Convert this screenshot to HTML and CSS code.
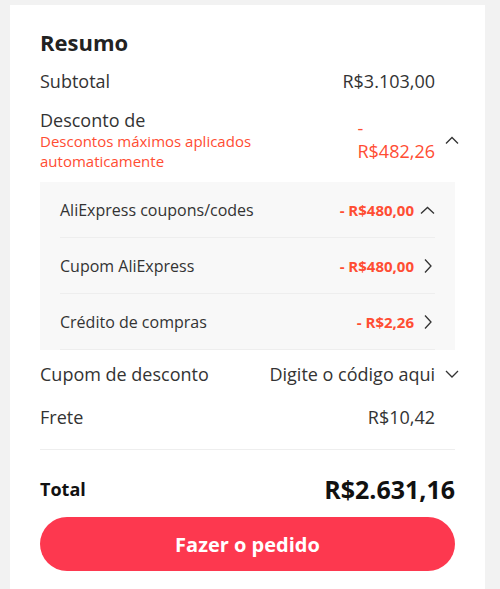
FILE: index.html
```html
<!DOCTYPE html>
<html lang="pt">
<head>
    <meta charset="UTF-8">
    <meta name="viewport" content="width=device-width, initial-scale=1.0">
    <title>Resumo do pedido</title>
    <link rel="stylesheet" href="styles.css">
</head>
<body>
    <div class="card">
        <h2 class="title">Resumo</h2>

        <div class="row">
            <span class="label">Subtotal</span>
            <span class="value">R$3.103,00</span>
            <span class="icon"></span>
        </div>

        <div class="row discount">
            <div class="label">
                Desconto de
                <div class="hint">Descontos máximos aplicados automaticamente</div>
            </div>
            <span class="value red stacked">-<br>R$482,26</span>
            <svg class="icon" viewBox="0 0 14 8"><path d="M1 7.5 7 1.5 13 7.5"/></svg>
        </div>

        <div class="breakdown">
            <div class="sub-row">
                <span class="label">AliExpress coupons/codes</span>
                <span class="value red bold">- R$480,00</span>
                <svg class="icon" viewBox="0 0 15 8"><path d="M1 7.5 7.5 1.5 14 7.5"/></svg>
            </div>
            <div class="sub-row">
                <span class="label">Cupom AliExpress</span>
                <span class="value red bold">- R$480,00</span>
                <svg class="icon tall" viewBox="0 0 15 16"><path d="M5 1.5 11 8 5 14.5"/></svg>
            </div>
            <div class="sub-row">
                <span class="label">Crédito de compras</span>
                <span class="value red bold">- R$2,26</span>
                <svg class="icon tall" viewBox="0 0 15 16"><path d="M5 1.5 11 8 5 14.5"/></svg>
            </div>
        </div>

        <div class="row coupon">
            <span class="label">Cupom de desconto</span>
            <span class="value">Digite o código aqui</span>
            <svg class="icon" viewBox="0 0 14 8"><path d="M1 1 7 7 13 1"/></svg>
        </div>

        <div class="row shipping">
            <span class="label">Frete</span>
            <span class="value">R$10,42</span>
            <span class="icon"></span>
        </div>

        <div class="total">
            <span class="total-label">Total</span>
            <span class="total-value">R$2.631,16</span>
        </div>

        <button class="order-btn">Fazer o pedido</button>
    </div>
</body>
</html>
```

FILE: styles.css
```css
body {
    margin: 0;
    background: #f2f2f2;
    font-family: "Open Sans", "Noto Sans", sans-serif;
    color: #333;
}
.card {
    background: white;
    width: 415px;
    margin: 5px 0 0 10px;
    padding: 22px 30px 18px;
}
.title {
    font-size: 22px;
    font-weight: 700;
    color: #222;
    margin: 0;
    line-height: 30px;
}
.row {
    display: flex;
    align-items: center;
    font-size: 18px;
    line-height: 24px;
    padding: 11px 0;
}
.row:first-of-type {
    padding-top: 12px;
}
.row .label {
    flex: 1;
}
.value {
    text-align: right;
}
.icon {
    width: 14px;
    height: 8px;
    margin-left: 10px;
    margin-right: -4px;
    flex-shrink: 0;
    fill: none;
    stroke: #333;
    stroke-width: 1.3;
}
.discount {
    padding: 5px 0 11px;
}
.discount .label {
    line-height: 22px;
}
.hint {
    color: #ff4d33;
    font-size: 15px;
    line-height: 20px;
    width: 240px;
}
.red {
    color: #ff4d33;
}
.bold {
    font-weight: 700;
}
.stacked {
    text-align: left;
    line-height: 23px;
}
.breakdown {
    background: #f8f8f8;
    padding: 0 20px;
    margin-bottom: 2px;
}
.sub-row {
    display: flex;
    align-items: center;
    height: 55px;
    font-size: 16px;
    border-bottom: 1px solid #eeeeee;
}
.sub-row .label {
    flex: 1;
}
.sub-row .value {
    font-size: 15px;
}
.sub-row .icon {
    width: 15px;
    margin-left: 6px;
    margin-right: 0;
}
.sub-row .icon.tall {
    height: 16px;
}
.coupon {
    padding: 10px 0;
}
.shipping {
    padding: 9px 0;
}
.total {
    display: flex;
    justify-content: space-between;
    align-items: center;
    border-top: 1px solid #eeeeee;
    margin-top: 11px;
    padding: 23px 0 12px;
    line-height: 32px;
}
.total-label {
    font-size: 18px;
    font-weight: 700;
    color: #111;
}
.total-value {
    font-size: 25px;
    font-weight: 700;
    color: #111;
}
.order-btn {
    display: block;
    width: 100%;
    height: 54px;
    border: none;
    border-radius: 27px;
    background: #fd384f;
    color: white;
    font-family: inherit;
    font-size: 20px;
    font-weight: 700;
    cursor: pointer;
}
```
